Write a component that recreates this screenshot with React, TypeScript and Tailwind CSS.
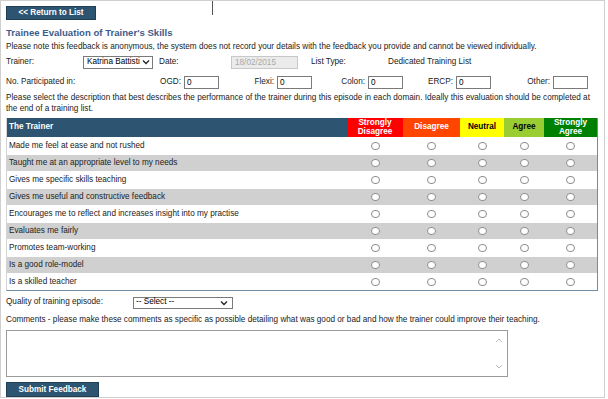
const ratings = [
  { label: "Strongly Disagree", cls: "bg-[#ff0000] text-white w-[56px]" },
  { label: "Disagree", cls: "bg-[#ff4500] text-white w-[57px]" },
  { label: "Neutral", cls: "bg-[#ffff00] text-black w-[44px]" },
  { label: "Agree", cls: "bg-[#9acd32] text-black w-[40px]" },
  { label: "Strongly Agree", cls: "bg-[#008000] text-white w-[53px]" },
];

const items = [
  "Made me feel at ease and not rushed",
  "Taught me at an appropriate level to my needs",
  "Gives me specific skills teaching",
  "Gives me useful and constructive feedback",
  "Encourages me to reflect and increases insight into my practise",
  "Evaluates me fairly",
  "Promotes team-working",
  "Is a good role-model",
  "Is a skilled teacher",
];

const Radio = () => (
  <span className="block w-[9px] h-[8px] rounded-full border border-[#8d8d8d] bg-white mx-auto" />
);

const Field = ({ label, value, labelW }: { label: string; value: string; labelW: string }) => (
  <div className="flex items-center">
    <span className={`${labelW} text-right pr-[3px]`}>{label}</span>
    <span className="w-[35px] h-[13px] border border-[#7a7a7a] bg-white px-[2px] leading-[12px] text-black">{value}</span>
  </div>
);

export default function App() {
  return (
    <div className="w-[608px] h-[399px] bg-white font-['Liberation_Sans',Arial,sans-serif] text-[8.2px] text-[#222] overflow-hidden">
      <div className="w-[605px] h-[398px] border border-[#cfcfcf] relative px-[5px] pt-[5px]">
        <div className="absolute left-[211px] top-0 w-px h-[14px] bg-[#555]" />
        <button className="w-[90px] h-[14px] bg-[#2d5470] border border-[#1f3f56] text-white font-bold text-[8.2px] leading-[12px]">
          &lt;&lt; Return to List
        </button>
        <h1 className="mt-[7px] text-[#3d5c8c] font-bold text-[9.6px] leading-[12px]">
          Trainee Evaluation of Trainer's Skills
        </h1>
        <p className="mt-[2px] leading-[11px]">
          Please note this feedback is anonymous, the system does not record your details with the feedback you provide and cannot be viewed individually.
        </p>
        <div className="flex items-center mt-[3px] h-[14px]">
          <span className="w-[77px]">Trainer:</span>
          <span className="w-[70px] h-[13px] border border-[#7a7a7a] flex items-center justify-between pl-[3px] pr-[2px] text-black">
            Katrina Battisti
            <svg width="8" height="6" viewBox="0 0 8 6"><path d="M1 1.5 L4 4.5 L7 1.5" fill="none" stroke="#222" strokeWidth="1.3" /></svg>
          </span>
          <span className="ml-[6px] w-[72px]">Date:</span>
          <span className="w-[67px] h-[13px] border border-[#c8c8c8] bg-[#ebebeb] text-[#a9a9a9] pl-[3px] leading-[12px]">18/02/2015</span>
          <span className="ml-[13px] w-[77px]">List Type:</span>
          <span>Dedicated Training List</span>
        </div>
        <div className="flex items-center mt-[6px] h-[14px]">
          <span className="w-[130px]">No. Participated in:</span>
          <Field label="OGD:" value="0" labelW="w-[48px]" />
          <Field label="Flexi:" value="0" labelW="w-[58px]" />
          <Field label="Colon:" value="0" labelW="w-[56px]" />
          <Field label="ERCP:" value="0" labelW="w-[53px]" />
          <Field label="Other:" value="" labelW="w-[62px]" />
        </div>
        <p className="mt-[3px] leading-[11px]">
          Please select the description that best describes the performance of the trainer during this episode in each domain. Ideally this evaluation should be completed at
          <br />
          the end of a training list.
        </p>
        <table className="mt-[4px] w-[592px] border-separate border-spacing-0 border-l border-l-[#d4d4d4] border-r border-r-[#6f8ea3] border-b border-b-[#6f8ea3]">
          <thead>
            <tr>
              <th className="h-[19px] p-0 bg-[#2d5470] text-white text-left font-bold pl-[2px]">The Trainer</th>
              {ratings.map((r) => (
                <th key={r.label} className={`${r.cls} h-[19px] p-0 font-bold leading-[8.5px] text-center`}>
                  {r.label.includes(" ") ? (
                    <>
                      {r.label.split(" ")[0]}
                      <br />
                      {r.label.split(" ")[1]}
                    </>
                  ) : (
                    r.label
                  )}
                </th>
              ))}
            </tr>
          </thead>
          <tbody>
            {items.map((it, i) => (
              <tr key={it} className={i % 2 ? "bg-[#d0d0d0]" : "bg-white"}>
                <td className="h-[17px] pl-[2px] border-t border-white">{it}</td>
                {ratings.map((r) => (
                  <td key={r.label} className="h-[17px] border-t border-white">
                    <Radio />
                  </td>
                ))}
              </tr>
            ))}
          </tbody>
        </table>
        <div className="flex items-center mt-[5px] h-[13px]">
          <span className="w-[127px]">Quality of training episode:</span>
          <span className="w-[100px] h-[12px] border border-[#7a7a7a] flex items-center justify-between pl-[2px] pr-[4px] text-black">
            -- Select --
            <svg width="8" height="6" viewBox="0 0 8 6"><path d="M1 1.5 L4 4.5 L7 1.5" fill="none" stroke="#222" strokeWidth="1.3" /></svg>
          </span>
        </div>
        <p className="mt-[6px] leading-[10px]">
          Comments - please make these comments as specific as possible detailing what was good or bad and how the trainer could improve their teaching.
        </p>
        <div className="mt-[5px] w-[502px] h-[47px] border border-[#9a9a9a] relative">
          <svg className="absolute right-[4px] top-[7px]" width="8" height="5" viewBox="0 0 8 5"><path d="M1 4 L4 1 L7 4" fill="none" stroke="#bbb" strokeWidth="1" /></svg>
          <svg className="absolute right-[4px] bottom-[7px]" width="8" height="5" viewBox="0 0 8 5"><path d="M1 1 L4 4 L7 1" fill="none" stroke="#bbb" strokeWidth="1" /></svg>
        </div>
        <button className="mt-[5px] w-[93px] h-[15px] bg-[#2d5470] border border-[#1f3f56] text-white font-bold text-[8.2px] leading-[13px]">
          Submit Feedback
        </button>
      </div>
    </div>
  );
}
